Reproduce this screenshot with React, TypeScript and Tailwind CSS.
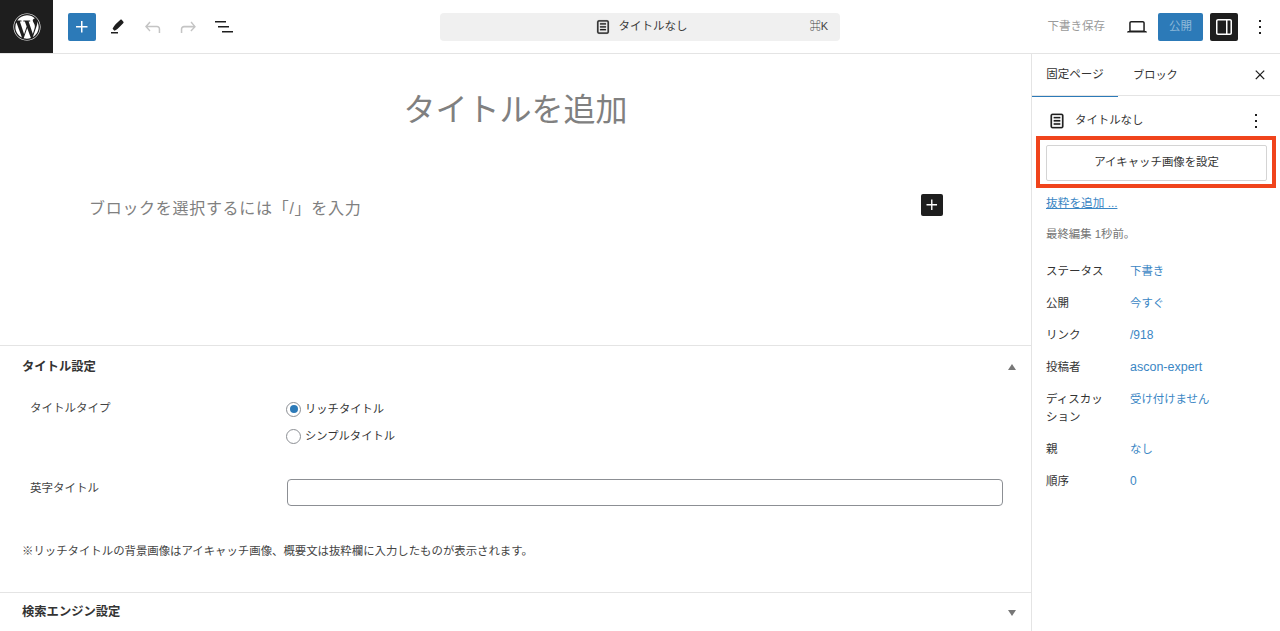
import React from "react";
import { FaWordpress } from "react-icons/fa";

const Doc = ({ size = 24 }: { size?: number }) => (
  <svg width={size} height={size} viewBox="0 0 24 24" fill="#1e1e1e" stroke="#1e1e1e" strokeWidth="0.3">
    <path d="M15.5 7.5h-7V9h7V7.5Zm-7 3.5h7v1.5h-7V11Zm7 3.5h-7V16h7v-1.5Z" />
    <path fillRule="evenodd" d="M17 4H7a2 2 0 0 0-2 2v12a2 2 0 0 0 2 2h10a2 2 0 0 0 2-2V6a2 2 0 0 0-2-2ZM7 5.5h10a.5.5 0 0 1 .5.5v12a.5.5 0 0 1-.5.5H7a.5.5 0 0 1-.5-.5V6a.5.5 0 0 1 .5-.5Z" />
  </svg>
);
const Dots = () => (
  <svg width="24" height="24" viewBox="0 0 24 24" fill="#1e1e1e">
    <path d="M13 19h-2v-2h2v2zm0-6h-2v-2h2v2zm0-6h-2V5h2v2z" />
  </svg>
);
const Plus = ({ size = 24 }: { size?: number }) => (
  <svg width={size} height={size} viewBox="0 0 24 24" fill="#fff">
    <path d="M11 12.5V17.5H12.5V12.5H17.5V11H12.5V6H11V11H6V12.5H11Z" />
  </svg>
);

const rows: [string, string, string][] = [
  ["ステータス", "下書き", "text-[11.4px]"],
  ["公開", "今すぐ", "text-[11.4px]"],
  ["リンク", "/918", "text-[12px]"],
  ["投稿者", "ascon-expert", "text-[12.5px]"],
  ["ディスカッション", "受け付けません", "text-[11.4px]"],
  ["親", "なし", "text-[11.4px]"],
  ["順序", "0", "text-[12px]"],
];

function Header() {
  return (
    <header className="flex h-[54px] items-center border-b border-[#e4e4e4] bg-white">
      <div className="flex h-[53px] w-[53px] items-center justify-center bg-[#1e1e1e] text-white">
        <FaWordpress size={28} />
      </div>
      <div className="ml-[15px] flex w-[372px] items-center">
        <button className="flex h-7 w-7 items-center justify-center rounded-[2px] bg-[#2c7ab8]">
          <Plus />
        </button>
        <svg className="ml-[9px]" width="24" height="24" viewBox="0 0 24 24" fill="#1e1e1e">
          <path d="M12.9 6.9 16.4 3.6c.4-.3 1-.3 1.300.05l1.700 1.800c.3.4.3.900 0 1.300l-3.400 3.500c-1.700 1.800-3.400 3.300-5.600 4.300l-1.800-1.900c.9-2.200 2.500-4 4.300-5.750Z" transform="translate(-1 1.200)" />
          <path d="M5 19h7v-1.500H5V19Z" transform="translate(1 -.5)" />
        </svg>
        <svg className="ml-[12px]" width="24" height="24" viewBox="0 0 24 24" fill="#c4c4c4">
          <path d="M18.300 11.700c-.6-.6-1.400-.9-2.300-.9H6.700l2.900-3.300-1.100-1-4.500 5L8.500 16.500l1-1.100-2.900-3.100H16c.5 0 .9.200 1.200.5.300.3.500.8.500 1.300V18h1.500v-3.900c0-.9-.3-1.700-.9-2.400Z" />
        </svg>
        <svg className="ml-[11px]" width="24" height="24" viewBox="0 0 24 24" fill="#c4c4c4">
          <path d="M15.600 6.500l-1.100 1 2.900 3.300H8c-.9 0-1.700.3-2.300.9-.6.600-.9 1.500-.9 2.400v4h1.500v-4c0-.5.200-.9.500-1.200.3-.3.700-.5 1.200-.5h9.300l-2.900 3.100 1 1.100 4.500-4.900-4.300-5.200Z" />
        </svg>
        <svg className="ml-[12px]" width="24" height="24" viewBox="0 0 24 24" fill="#1e1e1e">
          <path d="M3 6h11v1.500H3V6Zm3 5h11v1.500H6V11Zm4 5h11v1.500H10V16Z" />
        </svg>
      </div>
      <div className="relative flex h-7 w-[400px] items-center justify-center rounded-[4px] bg-[#f0f0f0] text-[11.5px] text-[#1e1e1e]">
        <span className="flex items-center gap-[4px]">
          <Doc size={20} />
          <span className="ml-[2px] text-[#3a3a3a]">タイトルなし</span>
        </span>
        <span className="absolute right-[12px] text-[11px] text-[#444]">⌘K</span>
      </div>
      <div className="ml-auto flex items-center">
        <span className="text-[11.5px] text-[#9a9a9a]">下書き保存</span>
        <svg className="ml-[20px]" width="24" height="24" viewBox="0 0 24 24" fill="#1e1e1e">
          <path d="M20.500 16h-.700V8c0-1.100-.9-2-2-2H6.200c-1.100 0-2 .9-2 2v8h-.7c-.8 0-1.500.7-1.500 1.500h20c0-.8-.7-1.500-1.500-1.500ZM5.700 8c0-.3.2-.5.500-.5h11.600c.3 0 .5.200.5.500v7.600H5.700V8Z" />
        </svg>
        <button className="ml-[9px] h-7 w-[45px] rounded-[2px] bg-[#2c7ab8] text-[11.5px] text-[#8fb9d9]">公開</button>
        <button className="ml-[7px] flex h-7 w-7 items-center justify-center rounded-[2px] bg-[#1e1e1e]">
          <svg width="24" height="24" viewBox="0 0 24 24" fill="#fff">
            <path d="M18 4H6c-1.100 0-2 .9-2 2v12c0 1.100.9 2 2 2h12c1.100 0 2-.9 2-2V6c0-1.100-.9-2-2-2ZM5.500 18V6c0-.3.2-.5.500-.5h8v13H6c-.3 0-.5-.2-.5-.5Zm13 0c0 .3-.2.500-.5.500h-2.500v-13H18c.3 0 .5.200.5.500v12Z" />
          </svg>
        </button>
        <span className="ml-[10px] mr-[8px] flex">
          <Dots />
        </span>
      </div>
    </header>
  );
}

function Canvas() {
  return (
    <section className="h-[292px] border-b border-[#e4e4e4] bg-white">
      <h1 className="pt-[35px] text-center text-[32px] leading-[42px] font-normal text-[#808080]">タイトルを追加</h1>
      <div className="mt-[64px] flex items-center pl-[89px]">
        <p className="w-[832px] text-[16px] leading-[28px] tracking-[0.7px] text-[#808080]">ブロックを選択するには「/」を入力</p>
        <button className="-mt-[9px] flex h-[22px] w-[22px] items-center justify-center rounded-[2px] bg-[#1e1e1e]">
          <Plus size={22} />
        </button>
      </div>
    </section>
  );
}

function Meta() {
  return (
    <section className="flex-1 overflow-hidden bg-white">
      <div className="flex h-[42px] items-center justify-between pl-[22px] pr-[15px]">
        <h2 className="text-[12.3px] font-bold text-[#333]">タイトル設定</h2>
        <span className="h-0 w-0 border-x-[4px] border-b-[6px] border-x-transparent border-b-[#777]" />
      </div>
      <div className="flex pl-[30px] pt-[11px]">
        <div className="w-[257px] text-[11.5px] leading-[18px] text-[#444]">タイトルタイプ</div>
        <div className="flex flex-col gap-[9px] pt-[1px] text-[11.3px] text-[#333]">
          <label className="-ml-[1px] flex h-[18px] items-center gap-[4px]">
            <span className="flex h-[15px] w-[15px] items-center justify-center rounded-full border border-[#8c8f94] bg-white">
              <span className="h-[8px] w-[8px] rounded-full bg-[#2c7ab8]" />
            </span>
            リッチタイトル
          </label>
          <label className="-ml-[1px] flex h-[18px] items-center gap-[4px]">
            <span className="h-[15px] w-[15px] rounded-full border border-[#8c8f94] bg-white" />
            シンプルタイトル
          </label>
        </div>
      </div>
      <div className="flex pl-[30px] pt-[34px]">
        <div className="w-[257px] text-[11.5px] leading-[18px] text-[#444]">英字タイトル</div>
        <div className="h-[27px] w-[716px] rounded-[4px] border border-[#8c8f94] bg-white" />
      </div>
      <p className="pl-[22px] pt-[36px] text-[11.4px] leading-[18px] text-[#444]">※リッチタイトルの背景画像はアイキャッチ画像、概要文は抜粋欄に入力したものが表示されます。</p>
      <div className="mt-[32px] flex h-[40px] items-center justify-between border-t border-[#e4e4e4] pl-[22px] pr-[15px]">
        <h2 className="text-[12.3px] font-bold text-[#333]">検索エンジン設定</h2>
        <span className="h-0 w-0 border-x-[4px] border-t-[6px] border-x-transparent border-t-[#777]" />
      </div>
    </section>
  );
}

function Sidebar() {
  return (
    <aside className="relative w-[249px] shrink-0 overflow-hidden border-l border-[#e4e4e4] bg-white text-[11.5px] text-[#1e1e1e]">
      <div className="flex h-[42px] items-center border-b border-[#e4e4e4]">
        <div className="relative flex h-[42px] w-[86px] items-center justify-center pt-[1px] text-[#333]">
          固定ページ
          <span className="absolute bottom-[-1px] left-0 h-px w-full bg-[#2c7ab8]" />
        </div>
        <div className="ml-[15px] pt-[1px] text-[11.2px] text-[#333]">ブロック</div>
        <svg className="ml-auto mr-[10px]" width="20" height="20" viewBox="0 0 24 24" fill="#1e1e1e">
          <path d="m13 11.800 4.600-4.600-1.100-1-4.500 4.600-4.500-4.600-1.100 1 4.600 4.600-4.600 4.600 1.100 1 4.500-4.500 4.500 4.500 1.100-1-4.600-4.600Z" />
        </svg>
      </div>
      <div className="flex h-[49px] items-center pl-[14px] pr-[12px]">
        <Doc size={22} />
        <span className="ml-[7px] text-[11.4px] text-[#333]">タイトルなし</span>
        <span className="ml-auto flex">
          <Dots />
        </span>
      </div>
      <div className="ml-[14px] mr-[13px] flex h-[36px] items-center justify-center rounded-[2px] border border-[#d4d4d4] text-[11.4px] text-[#333]">アイキャッチ画像を設定</div>
      <a className="ml-[14px] mt-[13px] block text-[11.7px] leading-[18px] text-[#3a86c4] underline">抜粋を追加 ...</a>
      <p className="ml-[14px] mt-[13px] text-[11.4px] leading-[18px] text-[#757575]">最終編集 1秒前。</p>
      <dl className="mt-[19px] flex flex-col gap-[14px] pl-[14px]">
        {rows.map(([k, v, c]) => (
          <div key={k} className="flex leading-[18px]">
            <dt className="w-[84px] shrink-0 pr-[20px] text-[#333]">{k}</dt>
            <dd className={`${c} text-[#3a86c4]`}>{v}</dd>
          </div>
        ))}
      </dl>
      <div className="absolute left-[4px] top-[82px] h-[52px] w-[240px] border-[4px] border-[#f0441c]" />
    </aside>
  );
}

export default function App() {
  return (
    <div className="flex h-[631px] w-[1280px] flex-col overflow-hidden bg-white font-['Liberation_Sans','Noto_Sans_CJK_JP',sans-serif]">
      <Header />
      <div className="flex min-h-0 flex-1">
        <main className="flex min-w-0 flex-1 flex-col">
          <Canvas />
          <Meta />
        </main>
        <Sidebar />
      </div>
    </div>
  );
}
